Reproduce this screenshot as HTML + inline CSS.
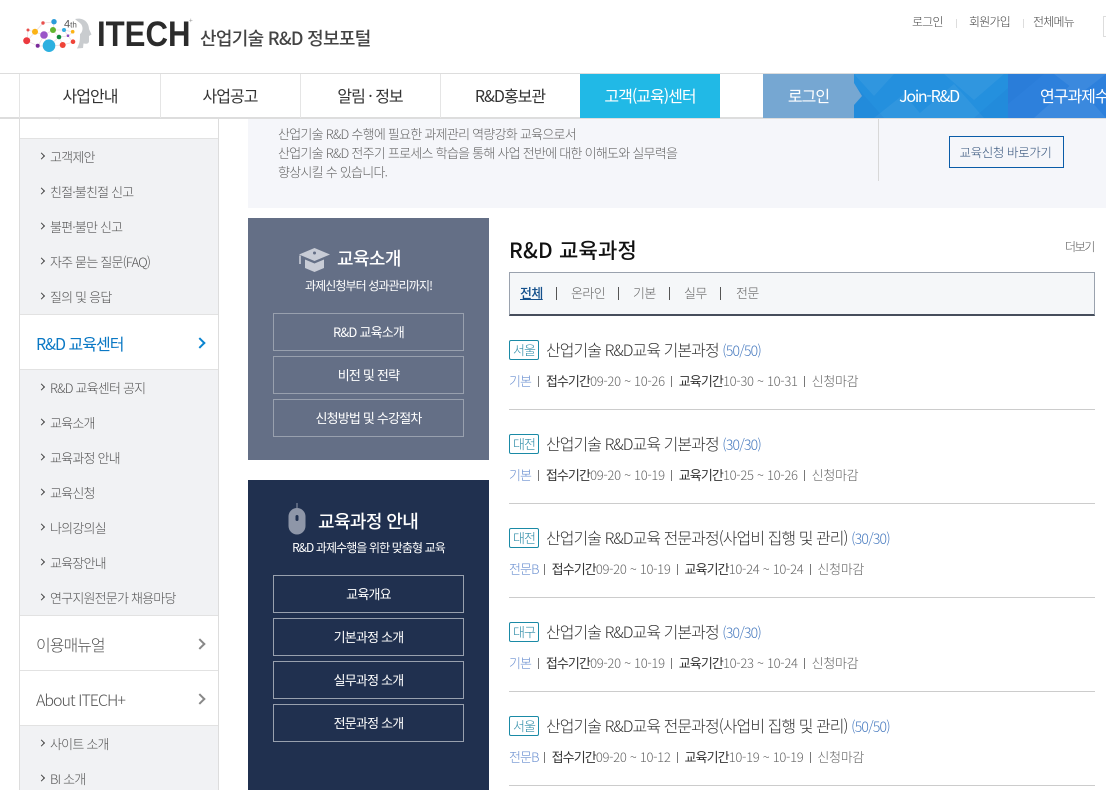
<!DOCTYPE html>
<html lang="ko"><head><meta charset="utf-8"><title>ITECH 산업기술 R&amp;D 정보포털</title>
<style>
*{box-sizing:border-box;margin:0;padding:0}
html,body{width:1106px;height:790px;overflow:hidden;background:#fff}
body{position:relative;font-family:"Noto Sans CJK KR","Liberation Sans",sans-serif;font-weight:300;color:#444}
.t{position:absolute;white-space:nowrap;line-height:20px}
.b{position:absolute}
.c{text-align:center}
.nav{font-size:16px;letter-spacing:-1px;color:#333;font-weight:400;top:85px;width:140px;text-align:center}
.w{color:#fff}
.si{font-size:13px;letter-spacing:-.8px;color:#555;left:50px;margin-top:1px}
.chev{position:absolute;left:38.5px;width:5px;height:5px;border-top:1.5px solid #444;border-right:1.5px solid #444;transform:translateY(-.5px) rotate(45deg)}
.big{position:absolute;left:196px;width:8px;height:8px;border-top:2px solid #888;border-right:2px solid #888;transform:rotate(45deg)}
.pb{position:absolute;left:273px;width:191px;height:38px;border:1px solid #98a0ae;color:#fff;font-size:13px;font-weight:400;letter-spacing:-.8px;text-align:center;line-height:35px}
.badge{position:absolute;left:509px;width:30px;height:20px;border:1px solid #1a8aa6;border-radius:2px;font-size:13px;letter-spacing:-1px;color:#2a8aa6;text-align:center;line-height:17px}
.title{left:546px;font-size:16px;letter-spacing:-.95px;color:#333}
.title small{font-size:14px;color:#4a7cc0;letter-spacing:-.8px}
.sub{left:509px;font-size:13px;letter-spacing:-.3px;color:#666}
.sub i{font-style:normal;color:#6a8fd0;letter-spacing:-.9px;margin-right:.7px}
.sub i.e{margin-right:-1px}
.sub b{font-weight:400;color:#333;letter-spacing:-.9px}
.sub u{text-decoration:none;display:inline-block;width:1px;height:11px;background:#777;margin:0 6.5px;vertical-align:-1px}
.ln{position:absolute;left:509px;width:586px;height:1px;background:#ccc}
</style></head><body>

<!-- sidebar (sits under the nav) -->
<div class="b" style="left:19px;top:100px;width:200px;height:690px;border-left:1px solid #ddd;border-right:1px solid #ddd;background:#f1f2f4"></div>
<div class="b" style="left:20px;top:100px;width:198px;height:39px;background:#fff;border-bottom:1px solid #e2e2e2"></div>
<div class="t si" style="top:102px">자료실</div>
<div class="b" style="left:20px;top:314px;width:198px;height:56px;background:#fff;border-top:1px solid #e2e2e2;border-bottom:1px solid #e2e2e2"></div>
<div class="b" style="left:20px;top:615px;width:198px;height:111px;background:#fff;border-top:1px solid #e2e2e2;border-bottom:1px solid #e2e2e2"></div>
<div class="b" style="left:20px;top:670px;width:198px;height:1px;background:#e2e2e2"></div>

<div class="chev" style="top:154px"></div><div class="t si" style="top:146px">고객제안</div>
<div class="chev" style="top:189px"></div><div class="t si" style="top:181px">친절·불친절 신고</div>
<div class="chev" style="top:224px"></div><div class="t si" style="top:216px">불편·불만 신고</div>
<div class="chev" style="top:259px"></div><div class="t si" style="top:251px">자주 묻는 질문(FAQ)</div>
<div class="chev" style="top:294px"></div><div class="t si" style="top:286px">질의 및 응답</div>
<div class="t" style="left:36px;top:333px;font-size:16px;letter-spacing:-1px;color:#0a78c4;font-weight:400">R&amp;D 교육센터</div>
<div class="big" style="top:339px;border-color:#0a84d0"></div>
<div class="chev" style="top:385px"></div><div class="t si" style="top:377px">R&amp;D 교육센터 공지</div>
<div class="chev" style="top:420px"></div><div class="t si" style="top:412px">교육소개</div>
<div class="chev" style="top:455px"></div><div class="t si" style="top:447px">교육과정 안내</div>
<div class="chev" style="top:490px"></div><div class="t si" style="top:482px">교육신청</div>
<div class="chev" style="top:525px"></div><div class="t si" style="top:517px">나의강의실</div>
<div class="chev" style="top:560px"></div><div class="t si" style="top:552px">교육장안내</div>
<div class="chev" style="top:595px"></div><div class="t si" style="top:587px">연구지원전문가 채용마당</div>
<div class="t" style="left:36px;top:634px;font-size:16px;letter-spacing:-1px;color:#555">이용매뉴얼</div>
<div class="big" style="top:640px"></div>
<div class="t" style="left:36px;top:689px;font-size:16px;letter-spacing:-1px;color:#555">About ITECH+</div>
<div class="big" style="top:695px"></div>
<div class="chev" style="top:741px"></div><div class="t si" style="top:733px">사이트 소개</div>
<div class="chev" style="top:776px"></div><div class="t si" style="top:768px">BI 소개</div>

<!-- header -->
<div class="b" style="left:0;top:0;width:1106px;height:73px;background:#fff"></div>
<svg class="b" style="left:20px;top:14px" width="74" height="40" viewBox="0 0 74 40">
<path d="M55 5C64 3 69 9 69 15L71.500 20.500 69 22 69 27C69 30 66 30 63.500 29.500L63 34 57 34.500C60 29 60 25 60 20 62 19 64 14 61 10 59 8 57 7 55 5z" fill="#c9cccf"/>
<g stroke="#ecdfe2" stroke-width=".8" fill="none"><path d="M7 27L8 16 15 18 23 9 34 8 33 16 24 21 15 18M7 27L15 18M7 27L18 32 29 32 43 31 53 28 48 22 44 16 33 16M24 21L29 32 39 23 43 31M24 21L18 32M39 23L33 16M44 16L53 18 48 22 39 23"/></g>
<circle cx="6.700" cy="26.700" r="3.500" fill="#ec3a3f"/><circle cx="8" cy="16" r="1.500" fill="#e8504d"/><circle cx="15" cy="17.700" r="3" fill="#fbb315"/><circle cx="23" cy="9" r="1.700" fill="#e8504d"/>
<circle cx="24" cy="21" r="3.800" fill="#9a56c8"/><circle cx="34" cy="7.700" r="2.700" fill="#2a9bd8"/><circle cx="33" cy="16" r="3" fill="#62b52f"/>
<circle cx="17.700" cy="31.700" r="2" fill="#7a2a9a"/><circle cx="29" cy="31.700" r="6.300" fill="#2cb0e0"/><circle cx="42.700" cy="31" r="3" fill="#ef4438"/><circle cx="39" cy="23" r="2.300" fill="#0f8a3c"/>
<circle cx="44" cy="16" r="2" fill="#35aee2"/><circle cx="48" cy="21.700" r="1.300" fill="#8a4cc4"/><circle cx="52.700" cy="17.700" r="1.800" fill="#fbb315"/><circle cx="53" cy="27.700" r="2.300" fill="#ef4438"/>
<text x="44" y="13.500" font-family="Liberation Sans, sans-serif" font-size="11" fill="#555">4<tspan font-size="8">th</tspan></text>
</svg>
<div class="t" style="left:97px;top:22px;font-family:'Liberation Sans',sans-serif;font-size:35px;line-height:25px;letter-spacing:0;font-weight:700;color:#2b2b2b;transform:scaleX(.89);transform-origin:0 0">ITECH</div>
<div class="t" style="left:189px;top:16px;font-size:7px;line-height:10px;color:#777">+</div>
<div class="t" style="left:200px;top:28px;font-size:18px;letter-spacing:-.7px;font-weight:500;color:#444">산업기술 R&amp;D 정보포털</div>
<div class="t" style="left:912px;top:12px;font-size:12px;letter-spacing:-.8px;color:#444">로그인</div>
<div class="t" style="left:969px;top:12px;font-size:12px;letter-spacing:-.8px;color:#444">회원가입</div>
<div class="t" style="left:1033px;top:12px;font-size:12px;letter-spacing:-.8px;color:#444">전체메뉴</div>
<div class="b" style="left:956px;top:19px;width:1px;height:9px;background:#ddd"></div>
<div class="b" style="left:1023px;top:19px;width:1px;height:9px;background:#ddd"></div>
<div class="b" style="left:1103px;top:16px;width:10px;height:21px;border:1px solid #ddd"></div>

<!-- nav -->
<div class="b" style="left:0;top:73px;width:1106px;height:46px;background:#fff;border-top:1px solid #ddd;border-bottom:2px solid #ddd"></div>
<div class="b" style="left:19px;top:74px;width:1px;height:44px;background:#e5e5e5"></div>
<div class="b" style="left:160px;top:74px;width:1px;height:44px;background:#e5e5e5"></div>
<div class="b" style="left:300px;top:74px;width:1px;height:44px;background:#e5e5e5"></div>
<div class="b" style="left:440px;top:74px;width:1px;height:44px;background:#e5e5e5"></div>
<div class="b" style="left:580px;top:74px;width:140px;height:44px;background:#21b9e6"></div>
<div class="b" style="left:763px;top:74px;width:91px;height:44px;background:#76a7d2"></div>
<svg class="b" style="left:854px;top:74px" width="252" height="44" viewBox="0 0 252 44">
<rect width="154" height="44" fill="#2490de"/><rect x="154" width="98" height="44" fill="#2d80dc"/>
<g fill="#fff" opacity=".06"><path d="M0 0L40 0 20 22zM60 44L100 10 130 44zM90 0L150 0 120 26zM20 44L50 20 70 44z"/></g>
<g fill="#0f5ec0" opacity=".1"><path d="M0 44L0 10 30 44zM120 44L154 14 154 44zM154 0L190 0 154 30z"/></g>
<g fill="#fff" opacity=".07"><path d="M180 44L220 8 252 44zM200 0L252 0 226 20z"/></g>
<path d="M0 9L8 22 0 31z" fill="#76a7d2"/>
</svg>
<div class="t nav" style="left:20px">사업안내</div>
<div class="t nav" style="left:160px">사업공고</div>
<div class="t nav" style="left:300px">알림 · 정보</div>
<div class="t nav" style="left:440px">R&amp;D홍보관</div>
<div class="t nav w" style="left:580px">고객(교육)센터</div>
<div class="t nav w" style="left:763px;width:91px">로그인</div>
<div class="t nav w" style="left:859px;letter-spacing:-1.300px">Join-R&amp;D</div>
<div class="t nav w" style="left:1040px;width:auto">연구과제수행</div>

<!-- intro band -->
<div class="b" style="left:248px;top:119px;width:858px;height:89px;background:#f5f6fa"></div>
<div class="t" style="left:278px;top:123.500px;font-size:13px;letter-spacing:-.75px;color:#666">산업기술 R&amp;D 수행에 필요한 과제관리 역량강화 교육으로서</div>
<div class="t" style="left:278px;top:143px;font-size:13px;letter-spacing:-.75px;color:#666">산업기술 R&amp;D 전주기 프로세스 학습을 통해 사업 전반에 대한 이해도와 실무력을</div>
<div class="t" style="left:278px;top:162px;font-size:13px;letter-spacing:-.75px;color:#666">향상시킬 수 있습니다.</div>
<div class="b" style="left:878px;top:119px;width:1px;height:62px;background:#d8d8d8"></div>
<div class="b c" style="left:949px;top:136px;width:115px;height:32px;border:1px solid #0a5ca8;padding-right:2px;font-size:12.500px;letter-spacing:-.4px;line-height:29px;color:#33527a">교육신청 바로가기</div>

<!-- panel 1 -->
<div class="b" style="left:248px;top:218px;width:241px;height:242px;background:#646f86"></div>
<svg class="b" style="left:298px;top:247px" width="33" height="26" viewBox="0 0 33 26">
<path d="M16.500 1L32 7.500 16.500 14 1 7.500z" fill="#c8ccd6"/><circle cx="16.500" cy="6" r="1.500" fill="#646f86"/>
<path d="M7 12.500L16.500 16.500 26 12.500 26 21 16.500 25 7 21z" fill="#c8ccd6"/><path d="M2 8.500V17" stroke="#c8ccd6" stroke-width="1.600"/>
</svg>
<div class="t w" style="left:337px;top:248px;font-size:18px;letter-spacing:-.6px;font-weight:500">교육소개</div>
<div class="t w c" style="left:248px;width:241px;top:276px;font-size:12px;font-weight:400;letter-spacing:-.9px">과제신청부터 성과관리까지!</div>
<div class="pb" style="top:313px">R&amp;D 교육소개</div>
<div class="pb" style="top:356px">비전 및 전략</div>
<div class="pb" style="top:399px">신청방법 및 수강절차</div>

<!-- panel 2 -->
<div class="b" style="left:248px;top:480px;width:241px;height:310px;background:#20304f"></div>
<svg class="b" style="left:287px;top:503px" width="20" height="32" viewBox="0 0 20 32">
<path d="M10 0V7" stroke="#8e96a8" stroke-width="1"/><rect x="1.500" y="5" width="17" height="26.500" rx="8.500" fill="#8e96a8"/><rect x="8.500" y="12" width="3" height="6" rx="1.500" fill="#20304f"/>
</svg>
<div class="t w" style="left:318px;top:511px;font-size:18px;letter-spacing:-.6px;font-weight:500">교육과정 안내</div>
<div class="t w c" style="left:248px;width:241px;top:538px;font-size:12px;font-weight:400;letter-spacing:-.9px">R&amp;D 과제수행을 위한 맞춤형 교육</div>
<div class="pb" style="top:575px">교육개요</div>
<div class="pb" style="top:618px">기본과정 소개</div>
<div class="pb" style="top:661px">실무과정 소개</div>
<div class="pb" style="top:704px">전문과정 소개</div>

<!-- list -->
<div class="t" style="left:509px;top:240px;font-size:21px;letter-spacing:.2px;font-weight:500;color:#111">R&amp;D 교육과정</div>
<div class="t" style="left:1065px;top:237px;font-size:12px;letter-spacing:-1.400px;color:#555">더보기</div>
<div class="b" style="left:509px;top:272px;width:586px;height:44px;background:#f5f7f9;border:1px solid #9aa2ae;border-bottom:2px solid #464e5c"></div>
<div class="t" style="left:520px;top:283px;font-size:13px;letter-spacing:-.6px;color:#14508c;font-weight:500;text-decoration:underline">전체</div>
<div class="t" style="left:571px;top:283px;font-size:13px;letter-spacing:-.6px;color:#666">온라인</div>
<div class="t" style="left:633px;top:283px;font-size:13px;letter-spacing:-.6px;color:#666">기본</div>
<div class="t" style="left:684px;top:283px;font-size:13px;letter-spacing:-.6px;color:#666">실무</div>
<div class="t" style="left:736px;top:283px;font-size:13px;letter-spacing:-.6px;color:#666">전문</div>
<div class="b" style="left:556px;top:287px;width:1px;height:13px;background:#555"></div>
<div class="b" style="left:618px;top:287px;width:1px;height:13px;background:#555"></div>
<div class="b" style="left:669px;top:287px;width:1px;height:13px;background:#555"></div>
<div class="b" style="left:720px;top:287px;width:1px;height:13px;background:#555"></div>

<div class="badge" style="top:340px">서울</div>
<div class="t title" style="top:339px">산업기술 R&amp;D교육 기본과정 <small>(50/50)</small></div>
<div class="t sub" style="top:371px"><i>기본</i><u></u><b>접수기간</b>09-20 ~ 10-26<u></u><b>교육기간</b>10-30 ~ 10-31<u></u>신청마감</div>
<div class="ln" style="top:409px"></div>

<div class="badge" style="top:434px">대전</div>
<div class="t title" style="top:433px">산업기술 R&amp;D교육 기본과정 <small>(30/30)</small></div>
<div class="t sub" style="top:465px"><i>기본</i><u></u><b>접수기간</b>09-20 ~ 10-19<u></u><b>교육기간</b>10-25 ~ 10-26<u></u>신청마감</div>
<div class="ln" style="top:503px"></div>

<div class="badge" style="top:528px">대전</div>
<div class="t title" style="top:527px">산업기술 R&amp;D교육 전문과정(사업비 집행 및 관리) <small>(30/30)</small></div>
<div class="t sub" style="top:559px"><i class="e">전문B</i><u></u><b>접수기간</b>09-20 ~ 10-19<u></u><b>교육기간</b>10-24 ~ 10-24<u></u>신청마감</div>
<div class="ln" style="top:597px"></div>

<div class="badge" style="top:622px">대구</div>
<div class="t title" style="top:621px">산업기술 R&amp;D교육 기본과정 <small>(30/30)</small></div>
<div class="t sub" style="top:653px"><i>기본</i><u></u><b>접수기간</b>09-20 ~ 10-19<u></u><b>교육기간</b>10-23 ~ 10-24<u></u>신청마감</div>
<div class="ln" style="top:691px"></div>

<div class="badge" style="top:716px">서울</div>
<div class="t title" style="top:715px">산업기술 R&amp;D교육 전문과정(사업비 집행 및 관리) <small>(50/50)</small></div>
<div class="t sub" style="top:747px"><i class="e">전문B</i><u></u><b>접수기간</b>09-20 ~ 10-12<u></u><b>교육기간</b>10-19 ~ 10-19<u></u>신청마감</div>
<div class="ln" style="top:785px"></div>
</body></html>
